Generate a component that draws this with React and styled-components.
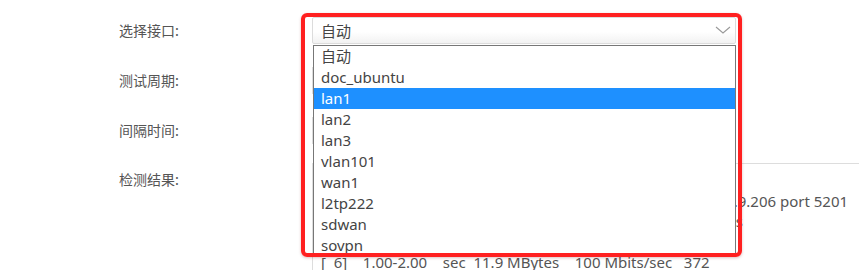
import React from 'react';
import styled, { createGlobalStyle } from 'styled-components';

const GlobalStyle = createGlobalStyle`
  html, body {
    margin: 0;
    padding: 0;
    background: #fff;
    overflow: hidden;
  }
  body {
    font-family: 'Noto Sans', 'Noto Sans CJK SC', sans-serif;
  }
`;

const Form = styled.div`
  padding: 5px 0 0 119px;
`;

const Row = styled.div`
  display: flex;
  align-items: center;
  height: 50px;
`;

const ResultRow = styled.div`
  display: flex;
  align-items: flex-start;
  padding-top: 8px;
`;

const Label = styled.div`
  width: 193px;
  flex-shrink: 0;
  font-family: 'Noto Sans CJK SC', sans-serif;
  font-size: 14px;
  line-height: 20px;
  color: #555;
  padding-top: ${(p) => (p.top ? '6px' : '0')};
`;

const Field = styled.div`
  position: relative;
  width: 424px;
`;

const SelectBox = styled.div`
  display: flex;
  align-items: center;
  justify-content: space-between;
  box-sizing: border-box;
  height: 27px;
  padding: 0 4px 0 8px;
  border: 1px solid #dcdcdc;
  border-radius: 2px;
  background: linear-gradient(#fff 55%, #f2f2f2);
  font-size: 15px;
  color: #444;
`;

const Input = styled.div`
  box-sizing: border-box;
  width: 424px;
  height: 27px;
  border: 1px solid #dcdcdc;
`;

const List = styled.ul`
  position: absolute;
  top: 28px;
  left: 1px;
  right: 0;
  margin: 0;
  padding: 0;
  list-style: none;
  background: #fff;
  border: 1px solid #777;
  z-index: 2;
`;

const Item = styled.li`
  height: 21px;
  line-height: 21px;
  padding: 0 7px;
  font-size: 15px;
  color: ${(p) => (p.active ? '#fff' : '#444')};
  background: ${(p) => (p.active ? '#1e90ff' : 'transparent')};
  white-space: nowrap;
`;

const Highlight = styled.div`
  position: absolute;
  top: -4px;
  left: -11px;
  width: 441px;
  height: 244px;
  box-sizing: border-box;
  border: 4px solid #ff2020;
  border-radius: 6px;
  box-shadow: 0 1px 3px rgba(120, 0, 0, 0.25);
  pointer-events: none;
  z-index: 3;
`;

const Output = styled.textarea`
  box-sizing: border-box;
  width: 620px;
  height: 200px;
  margin: 0;
  padding: 6px 8px;
  border: 1px solid #ddd;
  border-right: none;
  resize: none;
  overflow: hidden;
  white-space: pre;
  font-family: 'Noto Sans', sans-serif;
  font-size: 15px;
  line-height: 20.5px;
  color: #555;
  outline: none;
`;

const Chevron = () => (
  <svg width="16" height="8" viewBox="0 0 16 8">
    <polyline points="1,1 8,7 15,1" fill="none" stroke="#999" strokeWidth="1.1" />
  </svg>
);

const options = ['自动', 'doc_ubuntu', 'lan1', 'lan2', 'lan3', 'vlan101', 'wan1', 'l2tp222', 'sdwan', 'sovpn'];

const log = [
  'Connecting to host 192.168.9.206, port 5201',
  '[  6]  local 192.168.100.12 port 43052 connected to 192.168.9.206 port 5201',
  '[ ID] Interval            Transfer      Bitrate          Retr    Cwnd       s',
  '[  6]    0.00-1.00    sec  12.0 MBytes    101 Mbits/sec   384',
  '[  6]    1.00-2.00    sec  11.9 MBytes    100 Mbits/sec   372',
].join('\n');

const App = () => (
  <>
    <GlobalStyle />
    <Form>
      <Row>
        <Label>选择接口:</Label>
        <Field>
          <SelectBox>
            <span>自动</span>
            <Chevron />
          </SelectBox>
          <List>
            {options.map((o) => (
              <Item key={o} active={o === 'lan1'}>
                {o}
              </Item>
            ))}
          </List>
          <Highlight />
        </Field>
      </Row>
      <Row>
        <Label>测试周期:</Label>
        <Input />
      </Row>
      <Row>
        <Label>间隔时间:</Label>
        <Input />
      </Row>
      <ResultRow>
        <Label top>检测结果:</Label>
        <Output readOnly wrap="off" value={log} />
      </ResultRow>
    </Form>
  </>
);

export default App;
